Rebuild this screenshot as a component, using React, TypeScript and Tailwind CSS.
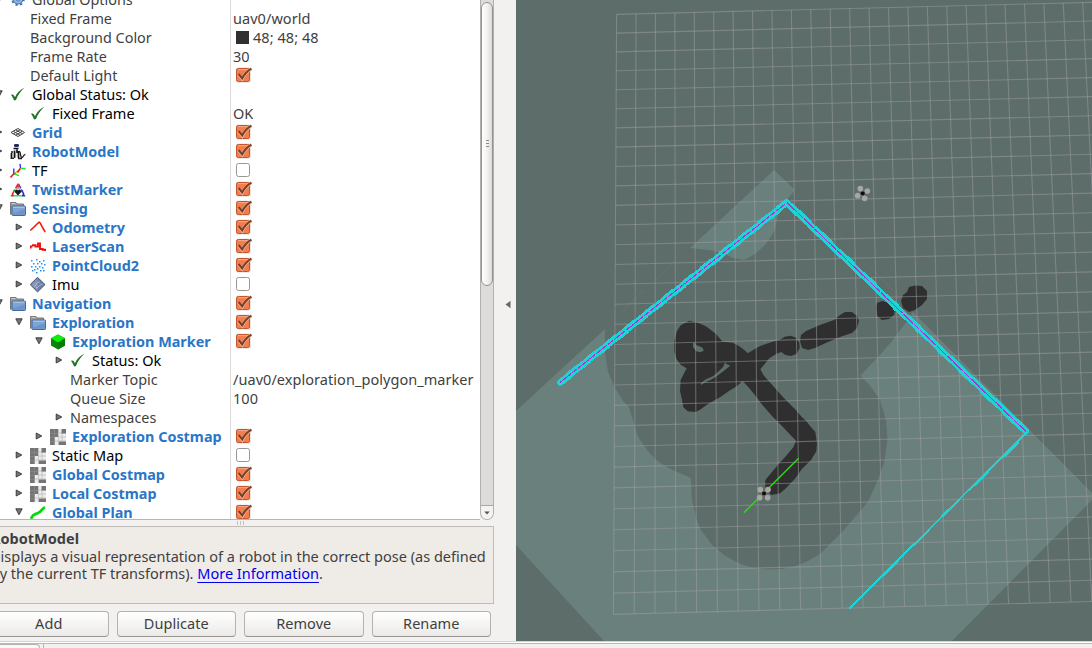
import React from "react";

type IconName =
  | "gear" | "check" | "grid" | "robot" | "tf" | "twist" | "folder"
  | "odom" | "laser" | "cloud" | "imu" | "marker" | "map" | "path";

type Row = {
  d: number;
  label: string;
  arrow?: "open" | "closed";
  icon?: IconName;
  kind?: "prop" | "status" | "on";
  value?: string;
  swatch?: boolean;
  check?: boolean;
};

const rows: Row[] = [
  { d: 0, label: "Global Options", arrow: "open", icon: "gear", kind: "prop" },
  { d: 1, label: "Fixed Frame", kind: "prop", value: "uav0/world" },
  { d: 1, label: "Background Color", kind: "prop", value: "48; 48; 48", swatch: true },
  { d: 1, label: "Frame Rate", kind: "prop", value: "30" },
  { d: 1, label: "Default Light", kind: "prop", check: true },
  { d: 0, label: "Global Status: Ok", arrow: "open", icon: "check", kind: "status" },
  { d: 1, label: "Fixed Frame", icon: "check", kind: "status", value: "OK" },
  { d: 0, label: "Grid", arrow: "closed", icon: "grid", kind: "on", check: true },
  { d: 0, label: "RobotModel", arrow: "closed", icon: "robot", kind: "on", check: true },
  { d: 0, label: "TF", arrow: "closed", icon: "tf", kind: "status", check: false },
  { d: 0, label: "TwistMarker", arrow: "closed", icon: "twist", kind: "on", check: true },
  { d: 0, label: "Sensing", arrow: "open", icon: "folder", kind: "on", check: true },
  { d: 1, label: "Odometry", arrow: "closed", icon: "odom", kind: "on", check: true },
  { d: 1, label: "LaserScan", arrow: "closed", icon: "laser", kind: "on", check: true },
  { d: 1, label: "PointCloud2", arrow: "closed", icon: "cloud", kind: "on", check: true },
  { d: 1, label: "Imu", arrow: "closed", icon: "imu", kind: "status", check: false },
  { d: 0, label: "Navigation", arrow: "open", icon: "folder", kind: "on", check: true },
  { d: 1, label: "Exploration", arrow: "open", icon: "folder", kind: "on", check: true },
  { d: 2, label: "Exploration Marker", arrow: "open", icon: "marker", kind: "on", check: true },
  { d: 3, label: "Status: Ok", arrow: "closed", icon: "check", kind: "status" },
  { d: 3, label: "Marker Topic", kind: "prop", value: "/uav0/exploration_polygon_marker" },
  { d: 3, label: "Queue Size", kind: "prop", value: "100" },
  { d: 3, label: "Namespaces", arrow: "closed", kind: "prop" },
  { d: 2, label: "Exploration Costmap", arrow: "closed", icon: "map", kind: "on", check: true },
  { d: 1, label: "Static Map", arrow: "closed", icon: "map", kind: "status", check: false },
  { d: 1, label: "Global Costmap", arrow: "closed", icon: "map", kind: "on", check: true },
  { d: 1, label: "Local Costmap", arrow: "closed", icon: "map", kind: "on", check: true },
  { d: 1, label: "Global Plan", arrow: "open", icon: "path", kind: "on", check: true },
];

function Icon({ name }: { name: IconName }) {
  return (
    <svg width="16" height="16" viewBox="0 0 16 16" className="block shrink-0" fill="none">
      {name === "gear" && (
        <>
          <circle cx="8" cy="7" r="5" fill="#8fb3e2" stroke="#3f6fb5" />
          <circle cx="8" cy="7" r="6" stroke="#3f6fb5" strokeWidth="1.6" strokeDasharray="2.4 2.3" />
          <circle cx="8" cy="7" r="2" fill="#fff" stroke="#3f6fb5" />
        </>
      )}
      {name === "check" && (
        <path d="M1 8 C3 6.8 4 8.6 5 10.2 C6.8 6.2 9.8 2.6 14.4 0.8 C10.4 4.4 7.8 8.4 6 13 L4 13.4 C3.2 11.2 2.4 9.4 1 8 Z" fill="#1d7324" />
      )}
      {name === "grid" && (
        <path d="M1 7.500 L8 3.500 L14.500 7.500 L8 11.500 Z M3.300 6.200 L10.200 10.200 M5.600 4.800 L12.400 8.800 M5.600 10.200 L12.400 6.200 M3.300 8.900 L10.200 4.800" stroke="#444" />
      )}
      {name === "robot" && (
        <>
          <rect x="4" y="0" width="5" height="3" rx="1.2" fill="#222b66" />
          <path d="M3.500 4.500 H8.500 M1 8 H3 M1.500 9 V14 M4.500 6.500 V14 M7 5.500 V9 M8.500 7 V14" stroke="#111" strokeWidth="1.7" />
          <path d="M9 7.500 C11.500 7.500 9.500 13.500 12 13.500 C13.500 13.500 13 10.500 15.400 10.300 M0.500 14.400 H4 M8 14.500 H12" stroke="#222" strokeWidth="1.3" />
          <path d="M5.700 8 V13" stroke="#888" />
        </>
      )}
      {name === "tf" && (
        <>
          <path d="M0.500 14.500 L4 10.500 L6 10.800" stroke="#f11" strokeWidth="1.6" />
          <path d="M3.800 5.500 V10.500 M10 0.800 L10.500 5" stroke="#22f" strokeWidth="1.3" />
          <path d="M4.500 11 L9 12.600 M10.500 5.500 H15.600" stroke="#1e3" strokeWidth="1.5" />
          <path d="M10.500 5.500 L5 10.200" stroke="#f6a800" strokeWidth="1.2" />
          <path d="M10.300 5.500 L7.500 9.500" stroke="#f11" strokeWidth="1.5" />
        </>
      )}
      {name === "twist" && (
        <>
          <path d="M8 2 L1.500 13.500" stroke="#e22" strokeWidth="1.5" strokeDasharray="5 1.500" />
          <path d="M8.500 2 L14.500 13.500" stroke="#33d" strokeWidth="1.5" strokeDasharray="5 1.500" />
          <path d="M1 13.800 H15" stroke="#1c4" strokeWidth="1.2" />
          <path d="M8 5 L11.800 9.500 L8 13.500 L4.200 9.500 Z" fill="#181818" />
          <path d="M8 0.800 L10 5 H6 Z" fill="#e33" />
          <path d="M6 7.500 C6.500 5.800 9.500 5.800 10 7.500 L8 8.300 Z" fill="#ddd" />
          <path d="M2.500 9 L5 7 L4.600 10 Z" fill="#2c5" />
          <path d="M13.500 9 L11 7 L11.500 10.500 Z" fill="#33e" />
          <path d="M0.400 14.200 L3 10.800 L4 14.200 Z" fill="#e22" />
          <path d="M15.600 14.200 L13 10.800 L12 14.200 Z" fill="#22c" />
        </>
      )}
      {name === "folder" && (
        <>
          <path d="M0.500 13.500 V1.500 H6 L7 3 H13.500 V13" fill="#9b9b98" stroke="#777773" />
          <path d="M1.500 2.500 H5.500" stroke="#c8c8c4" />
          <rect x="2" y="5" width="13.500" height="9.500" rx="0.800" fill="#7fa4d4" stroke="#41699f" />
          <path d="M3 6.200 H14.600" stroke="#b5cdec" />
          <path d="M3 12 C7 12 11 9 14.800 8.600 V13.800 H3 Z" fill="#6c94c8" />
        </>
      )}
      {name === "odom" && (
        <path d="M0.300 10.500 L5.500 5.700 M5 6 L9.600 1.700 M9.800 2.300 L12.500 7.400 M12.200 7 L15.200 12" stroke="#ee2010" strokeWidth="1.6" />
      )}
      {name === "laser" && (
        <path d="M0.600 9.500 V7.400 H2.500 M2 6.200 H5.500 V7.600 H8 V4.400 H10 V6.500 V10 H12.600 V11.800 M12.600 10.800 H15.400 V12" stroke="#ee0d0d" strokeWidth="1.9" />
      )}
      {name === "cloud" && (
        <g fill="#1f92f3">
          {[[1, 2], [6, 1], [9, 3], [13, 2], [3, 5], [7, 5], [11, 5], [14, 6], [1, 8], [5, 8], [4, 11], [9, 8], [12, 9], [7, 10], [10, 12], [13, 12], [6, 14], [2, 12]].map(([x, y]) => (
            <rect key={`${x}-${y}`} x={x} y={y} width="1.5" height="1.5" />
          ))}
        </g>
      )}
      {name === "imu" && (
        <>
          <path d="M7.500 0.300 L15 7.600 L7.500 14.900 L0.200 7.600 Z" fill="#6d80a5" stroke="#4a5775" />
          <path d="M7.500 1.500 V13.700 L1.400 7.600 Z" fill="#8798ba" />
          <path d="M4 9.800 C6.500 8.500 6 5.500 9.800 5 M6 11 C9 10.500 9 7.500 12.500 7" stroke="#b9c5db" strokeWidth="0.8" />
        </>
      )}
      {name === "marker" && (
        <>
          <path d="M8 0.500 L15 4.200 V11.500 L8 15.500 L1 11.500 V4.200 Z" fill="#0a8408" />
          <path d="M8 0.500 L15 4.200 L8 8.500 L1 4.200 Z" fill="#0bf00b" />
          <path d="M8 8.500 L15 4.200 V11.500 L8 15.500 Z" fill="#087a07" />
        </>
      )}
      {name === "map" && (
        <>
          <rect width="16" height="16" fill="#ececec" />
          <path d="M5 4 H16 M8.500 8 H16 M5 12 H16 M8.500 0 V12 M12 4 V12" stroke="#bdbdbd" strokeWidth="0.8" />
          <path d="M0 0 H8 V8 H4.600 V16 H0 Z M11.500 0 H16 V4.500 H11.500 Z M8.600 12.500 H16 V16 H8.600 Z" fill="#757575" />
          <path d="M4.500 0 V16 M0 4.500 H8 M0 8.500 H5 M0 12.500 H5" stroke="#8e8e8e" strokeWidth="0.6" />
        </>
      )}
      {name === "path" && (
        <path d="M1 13.800 C3 8.500 5 9.600 8 8 C12 6.400 11 4.400 15 2.200" stroke="#09d90b" strokeWidth="2.8" />
      )}
    </svg>
  );
}

function CheckBox({ on }: { on: boolean }) {
  return (
    <svg width="18" height="20" viewBox="0 0 18 20" className="block shrink-0" fill="none">
      {on ? (
        <>
          <rect x="1" y="1.600" width="15" height="15.200" rx="2" fill="#e9e4e0" />
          <rect x="1.500" y="2.500" width="13" height="13" rx="1.800" fill="#f47d4e" stroke="#c4552a" />
          <path d="M3 3.600 H13" stroke="#f9a783" />
          <path d="M3.400 8.400 L7.200 13 C9 9.200 11.800 5.600 16.400 2.800" stroke="#fbb797" strokeWidth="3" />
          <path d="M3.600 8 L7.200 12.400 C9 8.800 11.800 5.200 16.400 2.600" stroke="#73412c" strokeWidth="2.1" />
        </>
      ) : (
        <rect x="1.500" y="2.500" width="13" height="13" rx="2" fill="#fff" stroke="#9a9792" />
      )}
    </svg>
  );
}

function Arrow({ dir }: { dir?: "open" | "closed" }) {
  return (
    <div className="flex h-[19px] w-[22px] shrink-0 items-start justify-center pt-[5px]">
      {dir && (
        <svg width="8" height="8" viewBox="0 0 8 8" fill="#777">
          {dir === "open" ? (
            <path d="M0.800 0.800 H7.200 L4 6.800 Z" stroke="#333" strokeWidth="0.9" />
          ) : (
            <path d="M1.200 1 V7 L6.800 4 Z" stroke="#333" strokeWidth="0.9" />
          )}
        </svg>
      )}
    </div>
  );
}

function TreeRow({ row }: { row: Row }) {
  const tone =
    row.kind === "on"
      ? "text-[14.4px] font-bold text-[#2a76c6]"
      : row.kind === "status"
        ? "text-[14.5px] text-black"
        : "text-[14.4px] text-[#3f3f3f]";
  return (
    <div className="flex h-[19px] shrink-0 items-center leading-[19px]">
      <div className="-ml-3 flex w-[242px] shrink-0 items-center">
        <div className="shrink-0" style={{ width: row.d * 20 }} />
        <Arrow dir={row.arrow} />
        {row.icon && (
          <div className="mr-[6px]">
            <Icon name={row.icon} />
          </div>
        )}
        <span className={`${tone} whitespace-nowrap`}>{row.label}</span>
      </div>
      <div className="flex h-[19px] flex-1 items-center border-l border-[#dcdad8] pl-[2px] text-[14.5px] tracking-[0.05px] text-[#3f3f3f]">
        {row.swatch && <div className="mr-[4px] ml-[3px] h-[13px] w-[13px] shrink-0 bg-[#303030]" />}
        {row.value && <span className="whitespace-nowrap">{row.value}</span>}
        {row.check !== undefined && (
          <div className="ml-[2px]">
            <CheckBox on={row.check} />
          </div>
        )}
      </div>
    </div>
  );
}

function ScrollBar() {
  return (
    <div className="flex h-[520px] w-[14px] flex-col rounded-b-[7px] border-x border-b border-[#b3b0ac] bg-[#dedcda]">
      <div className="mt-[2px] flex h-[284px] w-full items-center justify-center rounded-[6px] border border-[#96928e] bg-gradient-to-r from-white via-[#f3f2f1] to-[#dddbd9]">
        <div className="-mt-[2px] flex flex-col gap-[2px]">
          <div className="h-px w-[3px] bg-[#8c8986]" />
          <div className="h-px w-[3px] bg-[#8c8986]" />
          <div className="h-px w-[3px] bg-[#8c8986]" />
        </div>
      </div>
      <div className="flex-1" />
      <div className="flex h-[14px] items-center justify-center rounded-b-[6px] border-t border-[#aaa6a2] bg-[#f4f3f2]">
        <svg width="6" height="4" viewBox="0 0 6 4" fill="#555">
          <path d="M0.300 0.500 H5.700 L3 3.600 Z" />
        </svg>
      </div>
    </div>
  );
}

const GRID = "rgba(160,160,164,0.5)";

function GridLines() {
  const cols = Array.from({ length: 26 }, (_, i) => i);
  const lines = Array.from({ length: 31 }, (_, i) => i);
  return (
    <g stroke={GRID} strokeWidth="1.1">
      {cols.map((i) => {
        const x1 = 616.6 + 19.42 * i;
        const x2 = 613.4 + 20.8 * i;
        return <line key={i} x1={x1} y1={14.4 - 0.0253 * (x1 - 616)} x2={x2} y2={614.3 - 0.0268 * (x2 - 613)} />;
      })}
      {lines.map((r) => {
        const xl = 616.6 - 0.108 * r;
        const y = 14.4 + 18.65 * r + 0.045 * r * r;
        const slope = 0.0253 + 0.00005 * r;
        return <line key={r} x1={xl} y1={y} x2={1100} y2={y - slope * (1100 - xl)} />;
      })}
    </g>
  );
}

function Band({ from, to, step }: { from: [number, number]; to: [number, number]; step: number }) {
  const dx = to[0] - from[0];
  const dy = to[1] - from[1];
  const len = Math.hypot(dx, dy);
  const ux = dx / len;
  const uy = dy / len;
  const n = Math.floor(len / step);
  const parts = Array.from({ length: n }, (_, i) => i);
  const at = (t: number, o: number) => [from[0] + ux * t - uy * o, from[1] + uy * t + ux * o];
  return (
    <g shapeRendering="crispEdges">
      <line x1={from[0]} y1={from[1]} x2={to[0]} y2={to[1]} stroke="#1fd2d4" strokeWidth="6.2" strokeLinecap="round" />
      {parts.map((i) => {
        const o = i % 2 === 0 ? 0.5 : -0.5;
        const [x1, y1] = at((i * len) / n, o);
        const [x2, y2] = at(((i + 1) * len) / n + 1, o);
        return <line key={i} x1={x1} y1={y1} x2={x2} y2={y2} stroke="#1fd2d4" strokeWidth="6.2" />;
      })}
      <line x1={from[0]} y1={from[1]} x2={to[0]} y2={to[1]} stroke="#b92bd6" strokeWidth="1.1" strokeDasharray="14 1 7 1" />
    </g>
  );
}

function Drone({ arms, center }: { arms: [number, number][]; center: [number, number] }) {
  return (
    <g>
      {arms.map(([x, y]) => (
        <g key={`${x}-${y}`}>
          <line x1={center[0]} y1={center[1]} x2={x} y2={y} stroke="#444" strokeWidth="2" />
          <circle cx={x} cy={y} r="8.5" fill="#a6a6a4" />
        </g>
      ))}
      <circle cx={center[0]} cy={center[1]} r="5.8" fill="#0c0c0c" />
    </g>
  );
}

function Viewport() {
  return (
    <svg width="576" height="641" viewBox="516 0 576 641" className="block shrink-0" fill="none">
      <rect x="516" y="0" width="576" height="641" fill="#5d6d6a" />
      <path
        fill="#6a807c"
        d="M516 411 L605 329 L605 353 L608 372 L615 388 L623 401 L629 407 L634 424 L638 437 L647 450 L655 459 L665 466 L675 471 L691 478 L692 500 L697 521 L701 530 L712 545 L724 555 L738 563 L750 567 L766 569.5 L782 569 L796 566 L808 561 L820 554 L843 531 L868 502 L877 482 L884 463 L887.5 440 L886 420 L880 400 L871 387 L860.5 375.5 L880 355 L892 341 L908 320 L913 312 L1092 493 L1092 500 L952 641 L604 641 L516 545 Z"
      />
      <path
        fill="#6a807c"
        d="M774 170 L795 190 L786 201 L778 214 L775 230 L770 238 L765 245 L755 254 L744 260 L733 258 L724 254 L712 250.5 L690 248 Z"
      />
      <path d="M622 312 L645 290 M655 280 L673 262 M824 220 L846 242 M870 267 L893 290" stroke="#687b77" strokeWidth="0.6" />
      <g fill="#302f2f">
        <g transform="translate(516 320) scale(0.33333)">
          <path
            fillRule="evenodd"
            d="M520 2 L545 8 L555 12 L572 20 L600 42 L620 65 L650 68 L668 77 L685 90 L695 100 L732 78 L770 65 L795 58 L806 50 L824 47 L840 53 L850 68 L851 84 L842 101 L825 108 L808 105 L796 96 L780 102 L760 115 L733 148 L742 165 L760 185 L800 230 L840 271 L858 292 L870 302 L884 320 L898 336 L903 370 L901 394 L885 420 L858 447 L838 475 L810 505 L792 520 L766 525 L748 508 L748 480 L766 458 L790 430 L810 408 L832 382 L840 362 L800 320 L770 290 L735 250 L722 232 L700 205 L680 183 L660 200 L640 212 L612 232 L576 252 L552 269 L540 276 L515 274 L502 262 L498 240 L492 212 L494 180 L503 162 L512 145 L494 134 L482 118 L475 95 L475 65 L482 35 L494 16 Z
            M535 67 L541 75 L560 83 L563 92 L553 97 L540 94 L531 80 L531 70 Z
            M628 126 L631 132 L643 137 L620 155 L600 170 L585 179 L568 187 L555 195 L554 190 L570 178 L592 168 L610 152 L621 141 Z"
          />
        </g>
        <path d="M806 331 L820 325 L834 320 L840 315 L845 312 L852 312 L857 316 L859 321 L857 328 L852 333 L846 335 L840 337 L828 342 L815 348 L808 350 L802 348 L800 341 L801 335 Z" />
        <path d="M877 303 L882 301 L890 303 L895 310 L894 315 L889 319 L882 320 L877 316 L876 308 Z" />
        <path d="M909 287 L915 285.500 L922 286 L927 291 L927 299 L922 305 L915 310 L909 312 L903 308 L901 301 L903 295 L907 292 Z" />
      </g>
      <GridLines />
      <Band from={[560, 382.5]} to={[787, 202.500]} step={12} />
      <Band from={[787, 202.500]} to={[1026, 431.500]} step={15} />
      <g stroke="#1fd2d4" shapeRendering="crispEdges">
        <path d="M1026 433 L850 608" strokeWidth="1.9" />
        <path d="M1019 442 L1003 457 M988 472 L974 486 M959 500 L942 517 M929 530 L913 546 M898 561 L883 576 M852 606 L849 609" strokeWidth="2.8" />
      </g>
      <g transform="translate(516 320) scale(0.33333)">
        <line x1="684" y1="578" x2="848" y2="415" stroke="#2ade18" strokeWidth="4" />
        <path d="M736 529 L764 501" stroke="#c33a18" strokeWidth="4" />
        <Drone arms={[[733, 509], [756, 509], [731, 533], [755, 533]]} center={[744, 520]} />
      </g>
      <g transform="translate(802 0) scale(0.33333)">
        <Drone arms={[[175, 566], [196, 573], [167, 587], [188, 595]]} center={[182, 580]} />
      </g>
    </svg>
  );
}

function PanelButton({ label }: { label: string }) {
  return (
    <button className="h-[26px] w-[119.500px] shrink-0 rounded-[4px] border border-[#b5b1ad] border-b-[#989490] bg-gradient-to-b from-white to-[#ebeae8] pb-[2px] text-[14.5px] leading-[22px] tracking-[0.05px] text-[#3f3f3f]">
      {label}
    </button>
  );
}

export default function App() {
  return (
    <div className="flex h-[648px] w-[1092px] flex-col overflow-hidden bg-[#f2f1f0] font-['Noto_Sans','Open_Sans',sans-serif]">
      <div className="flex h-[641px] shrink-0">
        <div className="flex w-[494px] shrink-0 flex-col overflow-hidden">
          <div className="flex h-[520px] shrink-0">
            <div className="h-[520px] w-[480px] overflow-hidden border-b border-[#b8b5b1] bg-white">
              <div className="-mt-[10px] flex flex-col">
                {rows.map((row, i) => (
                  <TreeRow key={i} row={row} />
                ))}
              </div>
            </div>
            <ScrollBar />
          </div>
          <div className="flex h-[6px] shrink-0 items-center gap-[2px] pl-[237px]">
            <div className="h-1 w-px bg-[#c5c2bf]" />
            <div className="h-1 w-px bg-[#c5c2bf]" />
            <div className="h-1 w-px bg-[#c5c2bf]" />
          </div>
          <div className="h-[78px] shrink-0 overflow-hidden border-y border-r border-[#bfbcb7] bg-[#efece8] pt-[3px] text-[14.5px] leading-[17.500px] whitespace-nowrap text-[#3f3f3f]">
            <div className="-ml-[9px] font-bold">RobotModel</div>
            <div className="-ml-[10px]">Displays a visual representation of a robot in the correct pose (as defined</div>
            <div className="-ml-[9px]">
              by the current TF transforms). <span className="text-[#0000f0] underline underline-offset-[3px]">More Information</span>.
            </div>
          </div>
          <div className="-ml-[11px] flex gap-[8px] pt-[7px]">
            <PanelButton label="Add" />
            <PanelButton label="Duplicate" />
            <PanelButton label="Remove" />
            <PanelButton label="Rename" />
          </div>
        </div>
        <div className="flex w-[22px] shrink-0 items-start justify-center pt-[300px] pl-[6px]">
          <svg width="6" height="9" viewBox="0 0 6 9" fill="#666">
            <path d="M5.500 0.800 V8.200 L0.500 4.500 Z" />
          </svg>
        </div>
        <Viewport />
      </div>
      <div className="h-px shrink-0 bg-[#d6d4d2]" />
      <div className="h-px shrink-0 bg-white" />
      <div className="h-px shrink-0 bg-[#bab7b4]" />
      <div className="flex flex-1 items-stretch gap-[3px]">
        <div className="w-[40px] rounded-tr-[4px] border-t border-r border-[#b8b5b1] bg-[#f8f8f7]" />
        <div className="flex-1 border-l border-[#b8b5b1] bg-[#f2f1f0]" />
      </div>
    </div>
  );
}
